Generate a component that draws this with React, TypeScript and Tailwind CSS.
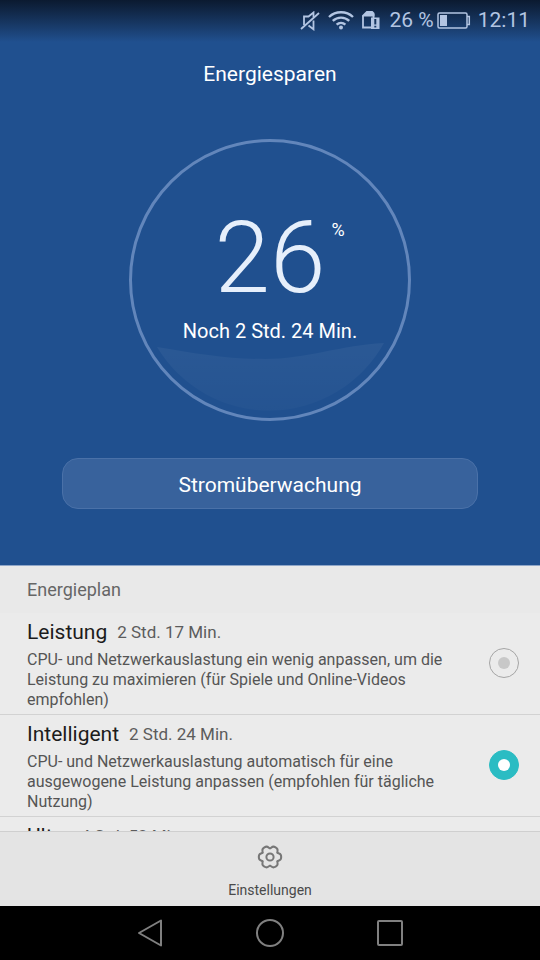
import { useState } from "react";

type Plan = {
  id: string;
  name: string;
  time: string;
  description?: string;
};

const PLANS: Plan[] = [
  {
    id: "performance",
    name: "Leistung",
    time: "2 Std. 17 Min.",
    description:
      "CPU- und Netzwerkauslastung ein wenig anpassen, um die Leistung zu maximieren (für Spiele und Online-Videos empfohlen)",
  },
  {
    id: "smart",
    name: "Intelligent",
    time: "2 Std. 24 Min.",
    description:
      "CPU- und Netzwerkauslastung automatisch für eine ausgewogene Leistung anpassen (empfohlen für tägliche Nutzung)",
  },
  {
    id: "ultra",
    name: "Ultra",
    time: "4 Std. 52 Min.",
  },
];

const GEAR_ANGLES = [0, 60, 120, 180, 240, 300];

function MuteIcon() {
  return (
    <svg width="20" height="20" viewBox="0 0 20 20" fill="none" stroke="currentColor" strokeWidth="1.8">
      <path d="M4 14V5.500h4.500l5-4v4.500M8.500 14.500l5 3.800V9.500" />
      <path d="M1 18 19 2" />
    </svg>
  );
}

function WifiIcon() {
  return (
    <svg width="26" height="20" viewBox="0 0 26 20" fill="none" stroke="currentColor" strokeWidth="2.4">
      <path d="M1 6a17.5 17.5 0 0 1 24 0" />
      <path d="M4.8 9.9a12 12 0 0 1 16.4 0" />
      <path d="M8.6 13.6a6.6 6.6 0 0 1 8.8 0" />
      <circle cx="13" cy="16.600" r="2" fill="currentColor" stroke="none" />
    </svg>
  );
}

function SimAlertIcon() {
  return (
    <svg width="18" height="20" viewBox="0 0 18 20">
      <path d="M1 5v11.500h8M11.500 3v4.500" fill="none" stroke="currentColor" strokeWidth="1.800" />
      <path d="M0 4.500 4.500 0h6l2 2v3.500H0Z" fill="currentColor" />
      <path fillRule="evenodd" d="M9 6.500h8.500V18H9ZM12.300 8v5.500h2V8Zm0 6.700v1.800h2v-1.800Z" fill="currentColor" />
    </svg>
  );
}

function BatteryIcon() {
  return (
    <svg width="34" height="18" viewBox="0 0 34 18">
      <rect x="1" y="1" width="29" height="15" rx="1.500" fill="none" stroke="currentColor" strokeWidth="1.500" />
      <path d="M30 4.500h2.300v8H30" fill="none" stroke="currentColor" strokeWidth="1.500" />
      <rect x="3" y="3" width="7" height="11" fill="currentColor" />
    </svg>
  );
}

function GearIcon() {
  return (
    <svg width="26" height="26" viewBox="-13 -13 26 26" fill="none" stroke="currentColor" strokeWidth="2" strokeLinecap="round">
      {GEAR_ANGLES.map((angle) => (
        <path
          key={angle}
          transform={`rotate(${angle})`}
          d="M7.500-4.300C8.800-2.900 11.200-4.200 11.200 0C11.200 4.200 8.800 2.900 7.500 4.300"
        />
      ))}
      <circle r="3.600" />
    </svg>
  );
}

function StatusBar() {
  return (
    <div className="flex h-[42px] items-center justify-end bg-linear-to-b from-[#0b1a30] to-[#20508f] pr-2.5 text-[21px] text-[#b3c5e2]">
      <MuteIcon />
      <span className="ml-2 flex">
        <WifiIcon />
      </span>
      <span className="mr-2.5 ml-2 flex">
        <SimAlertIcon />
      </span>
      <span className="mr-[3px]">26 %</span>
      <BatteryIcon />
      <span className="ml-[7px]">12:11</span>
    </div>
  );
}

function BatteryGauge() {
  return (
    <div className="relative mt-[49px] flex size-[282px] flex-col items-center">
      <svg className="absolute inset-0" viewBox="0 0 282 282" fill="none">
        <defs>
          <linearGradient id="water" x1="0" y1="0" x2="0" y2="1">
            <stop offset="0" stopColor="#fff" stopOpacity="0.050" />
            <stop offset="1" stopColor="#fff" stopOpacity="0.020" />
          </linearGradient>
        </defs>
        <path d="M28 208C70 215 98 220 136 220C176 220 214 206 255 204A131 131 0 0 1 28 208Z" fill="url(#water)" />
        <circle cx="141" cy="141" r="139.500" stroke="#6286bb" strokeWidth="3" />
      </svg>
      <div className="relative mt-[65px] flex text-[#e6effb]">
        <span className="text-[100px] leading-[108px] font-light">26</span>
        <span className="absolute top-3 left-full ml-1.5 text-lg text-white">%</span>
      </div>
      <p className="relative mt-[3px] text-xl leading-8 text-white">Noch 2 Std. 24 Min.</p>
    </div>
  );
}

type PlanRowProps = {
  plan: Plan;
  checked: boolean;
  onSelect: () => void;
};

function PlanRow({ plan, checked, onSelect }: PlanRowProps) {
  return (
    <label className="flex min-h-[102px] shrink-0 items-center justify-between border-b border-[#d2d2d2] pt-[3px] pr-[21px] pb-1 pl-[27px]">
      <span className="flex flex-col gap-0.5 self-start">
        <span className="flex items-center gap-2.5 leading-8">
          <span className="text-[21px] text-[#1c1c1c]">{plan.name}</span>
          <span className="text-[17px] text-[#5c5c5c]">{plan.time}</span>
        </span>
        {plan.description && (
          <span className="max-w-[440px] text-base leading-5 text-[#555]">
            {plan.description}
          </span>
        )}
      </span>
      <input
        type="radio"
        name="plan"
        checked={checked}
        onChange={onSelect}
        className="grid size-[30px] shrink-0 appearance-none place-content-center rounded-full border border-[#a5a5a5] before:size-3 before:rounded-full before:bg-[#c8c8c8] checked:border-[#2bbcc3] checked:bg-[#2bbcc3] checked:before:bg-white"
      />
    </label>
  );
}

function NavBar() {
  return (
    <nav className="flex h-[54px] shrink-0 items-center justify-center gap-[90px] bg-black text-[#808080]">
      <button type="button" aria-label="Zurück">
        <svg width="30" height="30" viewBox="0 0 30 30" fill="none" stroke="currentColor" strokeWidth="2" strokeLinejoin="round">
          <path d="M4 15 26 2.500v25Z" />
        </svg>
      </button>
      <button type="button" aria-label="Startseite">
        <svg width="30" height="30" viewBox="0 0 30 30" fill="none" stroke="currentColor" strokeWidth="2">
          <circle cx="15" cy="15" r="13" />
        </svg>
      </button>
      <button type="button" aria-label="Übersicht">
        <svg width="30" height="30" viewBox="0 0 30 30" fill="none" stroke="currentColor" strokeWidth="2">
          <rect x="3" y="3" width="24" height="24" rx="1" />
        </svg>
      </button>
    </nav>
  );
}

export default function App() {
  const [selected, setSelected] = useState("smart");

  return (
    <div className="flex h-screen flex-col bg-[#ebebeb] font-[Roboto,sans-serif]">
      <header className="shrink-0 border-b border-[#8fa6c8] bg-[#20508f]">
        <StatusBar />
        <div className="flex flex-col items-center px-[62px] pt-4 pb-14">
          <h1 className="text-[21px] leading-8 text-white">Energiesparen</h1>
          <BatteryGauge />
          <button
            type="button"
            className="mt-[37px] w-full rounded-2xl border border-[#4a71a8] bg-[#38629c] pt-2.5 pb-1.5 text-[21px] leading-[33px] text-white"
          >
            Stromüberwachung
          </button>
        </div>
      </header>

      <main className="flex min-h-0 flex-1 flex-col overflow-y-auto [scrollbar-width:none]">
        <h2 className="shrink-0 bg-[#e9e9e9] pt-2 pb-[7px] pl-[27px] text-lg leading-8 text-[#666]">
          Energieplan
        </h2>
        {PLANS.map((plan) => (
          <PlanRow
            key={plan.id}
            plan={plan}
            checked={selected === plan.id}
            onSelect={() => setSelected(plan.id)}
          />
        ))}
      </main>

      <footer className="shrink-0 border-t border-[#cfcfcf] bg-[#e4e4e4]">
        <button
          type="button"
          className="flex w-full flex-col items-center gap-2.5 pt-3 pb-1.5 text-[#777]"
        >
          <GearIcon />
          <span className="text-sm leading-5 text-[#4a4a4a]">Einstellungen</span>
        </button>
      </footer>

      <NavBar />
    </div>
  );
}
